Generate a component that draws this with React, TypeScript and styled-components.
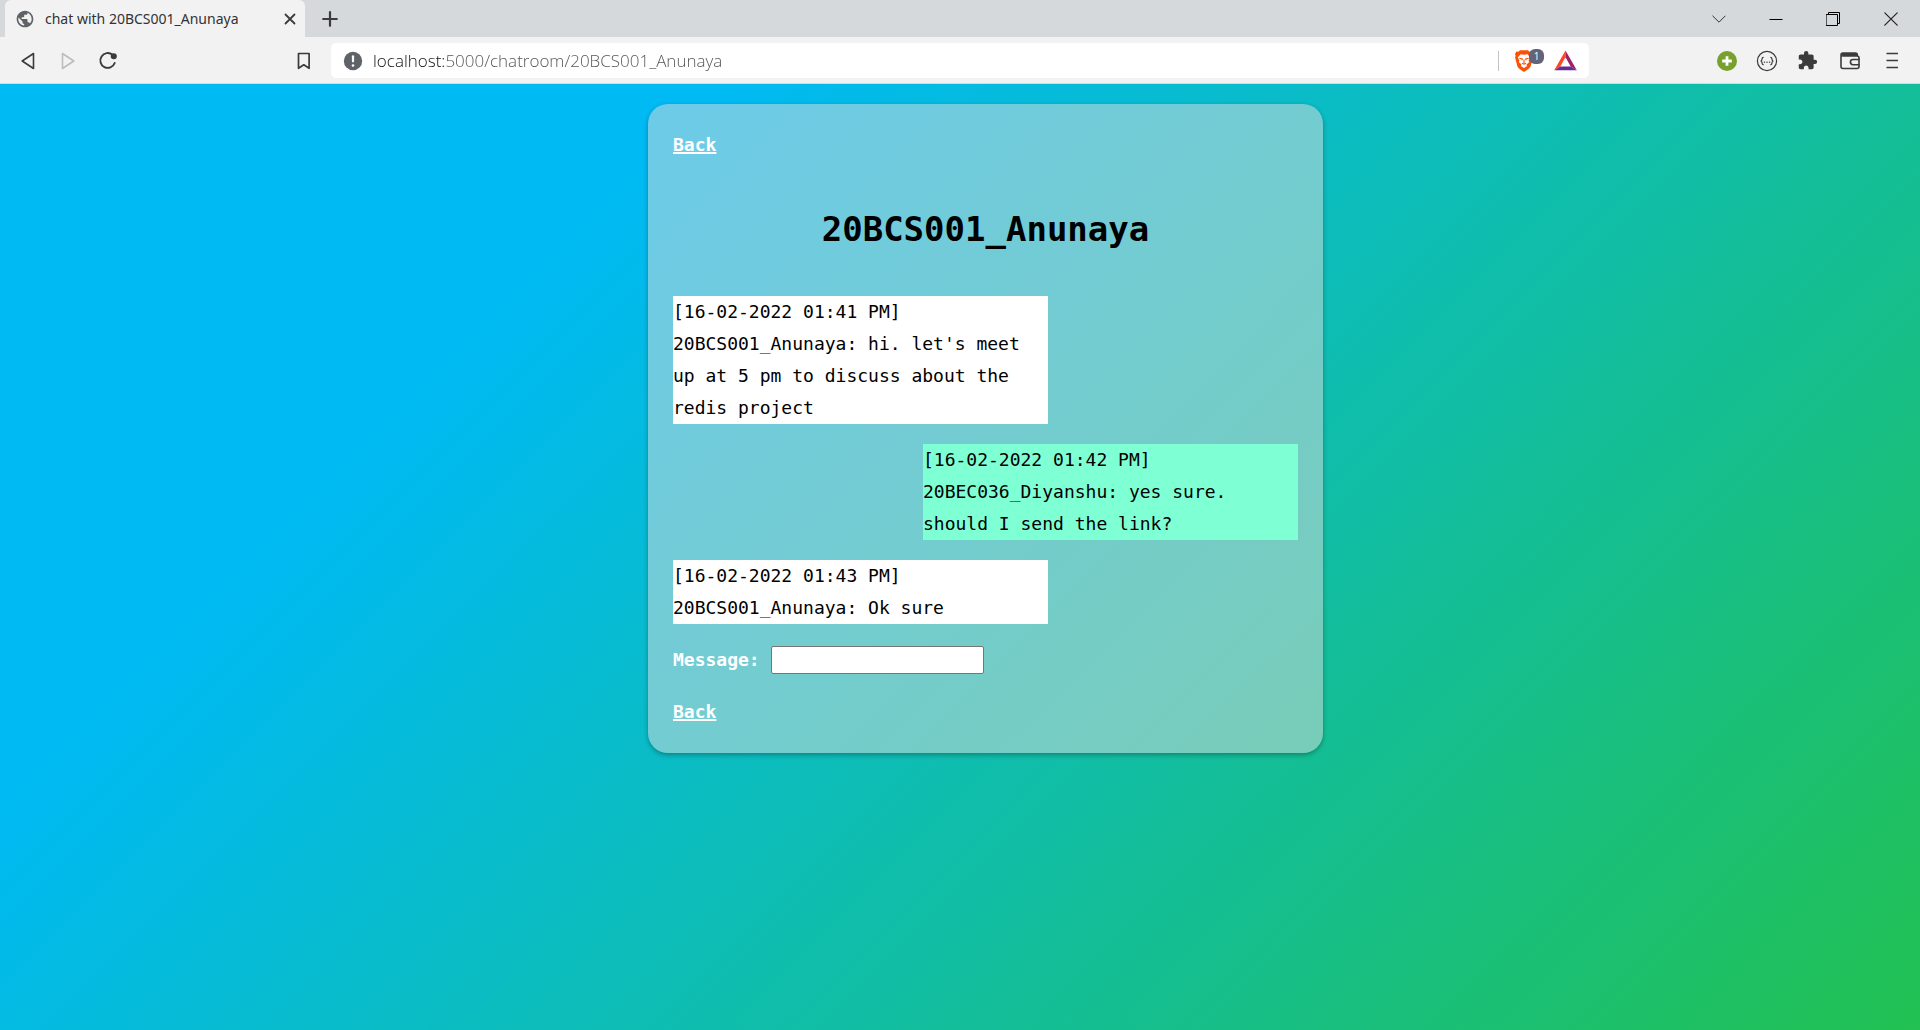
import React from "react";
import styled, { createGlobalStyle } from "styled-components";
import { MdExtension, MdPublic } from "react-icons/md";

const GlobalStyle = createGlobalStyle`
  *, *::before, *::after { box-sizing: border-box; }
  body { margin: 0; }
  button { border: 0; padding: 0; background: none; color: inherit; font: inherit; cursor: pointer; }
`;

const ui = `"Open Sans", "Noto Sans", sans-serif`;

const Screen = styled.div`
  display: flex;
  flex-direction: column;
  min-height: 100vh;
`;

const TabStrip = styled.header`
  display: flex;
  align-items: center;
  height: 37px;
  padding-left: 5px;
  background: #d5d9dc;
  font-family: ${ui};
  color: #333;
`;

const Tab = styled.div`
  display: flex;
  align-items: center;
  align-self: stretch;
  width: 300px;
  padding: 0 8px 0 10px;
  border-radius: 6px 6px 0 0;
  background: #f2f2f2;
`;

const TabTitle = styled.span`
  flex: 1;
  margin-left: 10px;
  font-family: "Noto Sans", "Open Sans", sans-serif;
  font-size: 14px;
  line-height: 20px;
  white-space: nowrap;
`;

const IconButton = styled.button<{ $w?: number; $color?: string }>`
  display: flex;
  flex: none;
  align-items: center;
  justify-content: center;
  width: ${(p) => p.$w ?? 40}px;
  height: 32px;
  color: ${(p) => p.$color ?? "#3b3b3b"};
  svg { display: block; }
`;

const WindowControls = styled.div`
  display: flex;
  margin-left: auto;
`;

const Toolbar = styled.nav`
  display: flex;
  align-items: center;
  height: 47px;
  padding: 1px 8px 0;
  border-bottom: 1px solid #d5d9dc;
  background: #f2f2f2;
  font-family: ${ui};
`;

const BookmarkSlot = styled.div`
  margin: 0 7px 0 156px;
`;

const AddressBar = styled.form`
  display: flex;
  flex: 1;
  align-items: center;
  height: 35px;
  padding: 0 12px;
  border-radius: 5px;
  background: #fff;
`;

const Url = styled.input`
  flex: 1;
  min-width: 0;
  margin-left: 10px;
  padding: 0;
  border: 0;
  outline: 0;
  color: #555;
  background: linear-gradient(90deg, #111 74px, #505050 74px) text;
  -webkit-text-fill-color: transparent;
  font: 300 17px/24px ${ui};
`;

const Divider = styled.span`
  width: 1px;
  height: 20px;
  margin-right: 15px;
  background: #c4c4c4;
`;

const Shield = styled.button`
  position: relative;
  width: 20px;
  height: 24px;
  margin-right: 20px;
`;

const Badge = styled.span`
  position: absolute;
  top: 0;
  left: 15px;
  width: 15px;
  height: 15px;
  border-radius: 6px;
  background: #62657a;
  color: #fff;
  font-size: 10px;
  line-height: 15px;
  text-align: center;
`;

const Extensions = styled.div`
  display: flex;
  margin-left: 118px;
`;

const Page = styled.main`
  flex: 1;
  padding: 20px 0 20px 51px;
  background: linear-gradient(135deg, #00baf4 25%, #22c152 100%);
  font-family: "DejaVu Sans Mono", monospace;
  font-size: 18px;
  line-height: 32px;
`;

const Card = styled.section`
  width: 675px;
  max-width: 100%;
  margin: 0 auto;
  padding: 25px;
  border-radius: 20px;
  background: rgba(220, 220, 220, 0.5);
  box-shadow: 0 2px 5px rgba(0, 0, 0, 0.3);
`;

const BackLink = styled.a`
  display: block;
  width: fit-content;
  color: #fff;
  font-weight: 700;
  text-decoration: underline;
  text-decoration-thickness: 2px;
`;

const Title = styled.h1`
  margin: 38px 0 37px;
  font-size: 34px;
  line-height: 60px;
  text-align: center;
`;

const Messages = styled.div`
  display: flex;
  flex-direction: column;
  gap: 20px;
`;

const Bubble = styled.p<{ $own?: boolean }>`
  align-self: ${(p) => (p.$own ? "flex-end" : "flex-start")};
  width: 60%;
  margin: 0;
  background: ${(p) => (p.$own ? "#7fffd4" : "#fff")};
  color: #000;
  white-space: pre-line;
`;

const Compose = styled.form`
  display: flex;
  align-items: center;
  gap: 11px;
  height: 32px;
  margin: 20px 0;
`;

const Label = styled.label`
  color: #fff;
  font-weight: 700;
`;

const MessageInput = styled.input`
  width: 213px;
  height: 28px;
  padding: 0 4px;
  border: 1px solid #767676;
  border-radius: 2px;
  background: #fff;
  font: inherit;
`;

type Message = { time: string; user: string; text: string; own?: boolean };

const messages: Message[] = [
  { time: "16-02-2022 01:41 PM", user: "20BCS001_Anunaya", text: "hi. let's meet up at 5 pm to discuss about the redis project" },
  { time: "16-02-2022 01:42 PM", user: "20BEC036_Diyanshu", text: "yes sure. should I send the link?", own: true },
  { time: "16-02-2022 01:43 PM", user: "20BCS001_Anunaya", text: "Ok sure" },
];

const stroke = { fill: "none", stroke: "currentColor", strokeLinecap: "round", strokeLinejoin: "round" } as const;

function BrowserTabs() {
  return (
    <TabStrip>
      <Tab>
        <MdPublic size={20} color="#5f6368" />
        <TabTitle>chat with 20BCS001_Anunaya</TabTitle>
        <IconButton $w={14} aria-label="Close tab">
          <svg width="12" height="12" viewBox="0 0 12 12" {...stroke} strokeWidth="1.8"><path d="M1.5 1.5l9 9M10.500 1.500l-9 9" /></svg>
        </IconButton>
      </Tab>
      <IconButton $w={50} aria-label="New tab">
        <svg width="16" height="16" viewBox="0 0 16 16" {...stroke} strokeWidth="2.2"><path d="M8 1.200v13.600M1.200 8h13.600" /></svg>
      </IconButton>
      <WindowControls>
        <IconButton $w={57} $color="#333" aria-label="Search tabs">
          <svg width="14" height="14" viewBox="0 0 14 14" {...stroke} strokeWidth="1"><path d="M.8 4l6.200 6.200L13.200 4" /></svg>
        </IconButton>
        <IconButton $w={57} $color="#000" aria-label="Minimize">
          <svg width="14" height="14" viewBox="0 0 14 14" {...stroke} strokeLinecap="butt"><path d="M.5 7.500h13" /></svg>
        </IconButton>
        <IconButton $w={57} $color="#000" aria-label="Restore">
          <svg width="14" height="14" viewBox="0 0 14 14" {...stroke}><path d="M.5 2.500h11v11h-11zM2.500 2.500v-2h11v11h-2" /></svg>
        </IconButton>
        <IconButton $w={59} $color="#222" aria-label="Close window">
          <svg width="14" height="14" viewBox="0 0 14 14" {...stroke} strokeWidth="1.200"><path d="M.8.8l12.400 12.400M13.200.8L.8 13.200" /></svg>
        </IconButton>
      </WindowControls>
    </TabStrip>
  );
}

function BrowserToolbar() {
  return (
    <Toolbar>
      <IconButton aria-label="Back">
        <svg width="18" height="18" viewBox="0 0 18 18" {...stroke} strokeWidth="1.600"><path d="M14.500 1.500v15L3.200 9z" /></svg>
      </IconButton>
      <IconButton $color="#bdbdbd" aria-label="Forward">
        <svg width="18" height="18" viewBox="0 0 18 18" {...stroke} strokeWidth="1.600"><path d="M3.500 1.500v15L14.800 9z" /></svg>
      </IconButton>
      <IconButton aria-label="Reload">
        <svg width="20" height="20" viewBox="0 0 20 20" {...stroke} strokeWidth="1.900">
          <path d="M14.500 3.800A7.400 7.400 0 1 0 16.700 12" />
          <circle cx="15.800" cy="5.300" r="2.100" fill="currentColor" />
        </svg>
      </IconButton>
      <BookmarkSlot>
        <IconButton aria-label="Bookmark this page">
          <svg width="18" height="18" viewBox="0 0 18 18" {...stroke} strokeWidth="1.700"><path d="M3.500 1.500h10.600v14.800L8.800 12.800l-5.300 3.500z" /></svg>
        </IconButton>
      </BookmarkSlot>
      <AddressBar>
        <svg width="20" height="20" viewBox="0 0 20 20" fill="#5f6368">
          <circle cx="10" cy="10" r="9.200" />
          <rect x="8.900" y="4.200" width="2.200" height="7.200" rx="1.100" fill="#fff" />
          <circle cx="10" cy="14.500" r="1.300" fill="#fff" />
        </svg>
        <Url aria-label="Address" defaultValue="localhost:5000/chatroom/20BCS001_Anunaya" />
        <Divider />
        <Shield type="button" aria-label="Brave Shields, 1 blocked">
          <svg width="20" height="24" viewBox="0 0 20 24">
            <path fill="#fb5005" d="M6 1.200h8l1.600 1.600 2-.2 1.400 2.400-.6 1.800.5 1.700-2.200 8.600c-.4 1.500-1.400 2.400-2.600 3.200L10 23l-4.100-2.700c-1.200-.8-2.200-1.700-2.600-3.200L1.100 8.500l.5-1.700L1 5l1.400-2.400 2 .2z" />
            <path fill="#fff" d="M6.500 5.200L10 5.800l3.500-.6 2.700 3.200-1.600 3 .5 1.800-2.600 2.200.6 1.700L10 19l-3.100-1.900.6-1.700-2.600-2.200.5-1.800-1.600-3z" />
            <path fill="none" stroke="#fb5005" strokeWidth="1.100" d="M5.300 9.200l3 .7-.4 1.500M14.700 9.200l-3 .7.4 1.500M10 10.500v3.800M8 14.200l2 1 2-1" />
          </svg>
          <Badge>1</Badge>
        </Shield>
        <svg width="23" height="21" viewBox="0 0 23 21">
          <path fill="#ff4724" d="M11.500.5v6.800L6.300 16.500.2 20.200z" />
          <path fill="#9e1f63" d="M11.500.5l11.300 19.700-6.100-3.700-5.200-9.200z" />
          <path fill="#662d91" d="M.2 20.200l6.100-3.700h10.400l6.100 3.700z" />
        </svg>
      </AddressBar>
      <Extensions>
        <IconButton aria-label="Add extension">
          <svg width="20" height="20" viewBox="0 0 20 20"><circle cx="10" cy="10" r="10" fill="#78a02c" /><path d="M10 5.200v9.600M5.200 10h9.600" stroke="#fff" strokeWidth="2.800" /></svg>
        </IconButton>
        <IconButton aria-label="Formatter extension">
          <svg width="22" height="22" viewBox="0 0 22 22" {...stroke} strokeWidth="1.200">
            <circle cx="11" cy="11" r="9.600" />
            <path d="M7.200 7.300C5.300 7.300 6.700 11 4.900 11c1.800 0 .4 3.700 2.300 3.700M14.800 7.300c1.900 0 .5 3.700 2.300 3.700-1.800 0-.4 3.700-2.300 3.700" />
            <path d="M8.300 12.200h.3M10.850 12.200h.3M13.400 12.200h.3" />
          </svg>
        </IconButton>
        <IconButton aria-label="Extensions"><MdExtension size={21} /></IconButton>
        <IconButton $w={45} aria-label="Wallet">
          <svg width="20" height="18" viewBox="0 0 20 18" {...stroke} strokeWidth="1.600">
            <path d="M1 3v11.500a2 2 0 0 0 2 2h14a2 2 0 0 0 2-2V6a2 2 0 0 0-2-2H2.500M1 3a2 2 0 0 1 2-2h12.500a1.800 1.800 0 0 1 1.800 1.800V4M2 2.500h14" />
            <path d="M19 7.500h-6a2.600 2.600 0 0 0 0 5.200h6" />
          </svg>
        </IconButton>
        <IconButton aria-label="Menu">
          <svg width="12" height="17" viewBox="0 0 12 17" {...stroke} strokeLinecap="butt" strokeWidth="1.600"><path d="M.5 1.500H12M.5 8.500H12M.5 15.500H12" /></svg>
        </IconButton>
      </Extensions>
    </Toolbar>
  );
}

export default function App() {
  return (
    <Screen>
      <GlobalStyle />
      <BrowserTabs />
      <BrowserToolbar />
      <Page>
        <Card>
          <BackLink href="#back">Back</BackLink>
          <Title>20BCS001_Anunaya</Title>
          <Messages>
            {messages.map((m) => (
              <Bubble key={m.time} $own={m.own}>
                {`[${m.time}]\n${m.user}: ${m.text}`}
              </Bubble>
            ))}
          </Messages>
          <Compose>
            <Label htmlFor="message">Message:</Label>
            <MessageInput id="message" type="text" />
          </Compose>
          <BackLink href="#back">Back</BackLink>
        </Card>
      </Page>
    </Screen>
  );
}
